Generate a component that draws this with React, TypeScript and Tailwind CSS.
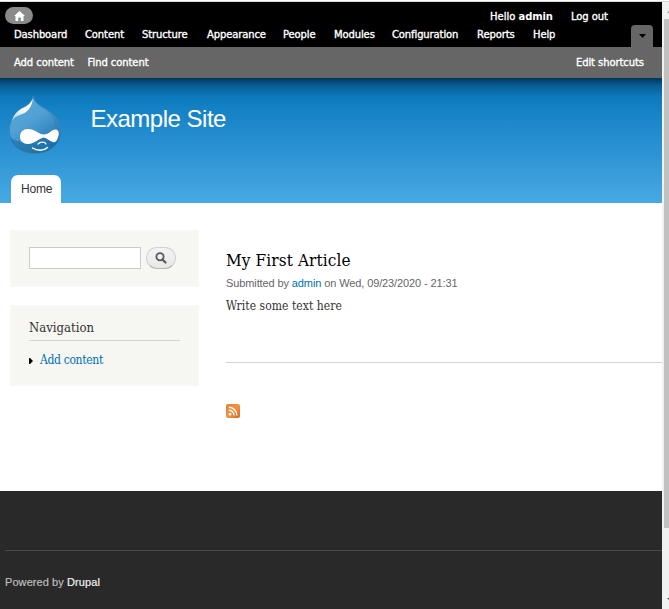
import React from "react";

const menu = [
  { label: "Dashboard", cls: "w-[71px]" },
  { label: "Content", cls: "w-[57px]" },
  { label: "Structure", cls: "w-[65px]" },
  { label: "Appearance", cls: "w-[76px]" },
  { label: "People", cls: "w-[51px]" },
  { label: "Modules", cls: "w-[58px]" },
  { label: "Configuration", cls: "w-[85px]" },
  { label: "Reports", cls: "w-[56px]" },
  { label: "Help", cls: "w-[30px]" },
];

function Druplicon() {
  return (
    <svg width="54" height="60" viewBox="0 0 54 60" className="block">
      <defs>
        <linearGradient id="drop" x1="0" y1="0" x2="0.6" y2="1">
          <stop offset="0" stopColor="#5dabdc" />
          <stop offset="0.5" stopColor="#50a0d4" />
          <stop offset="1" stopColor="#2278b0" />
        </linearGradient>
        <linearGradient id="shine" x1="1" y1="0" x2="0" y2="1">
          <stop offset="0.4" stopColor="#fff" />
          <stop offset="1" stopColor="#fff" stopOpacity="0.5" />
        </linearGradient>
      </defs>
      <path d="M25 1C27 9 33 11 39 15C48 20 52.5 27 52.5 36C52.5 50 41 58.500 27 58.500C12 58.500 1.500 49 1.500 35C1.500 25 7 17 14 13C20 10 24 7 25 1Z" fill="url(#drop)" stroke="#3c80ab" strokeWidth="0.8" />
      <path d="M36 14C45 19 48 26 47 35L51 37C52 27 46 19 36 14Z" fill="#2f80b8" opacity="0.6" />
      <path d="M2 42C8 48 18 47 27 44C37 40 46 40 52 43C47 54 38 58 27 58C14 58 4 52 2 42Z" fill="#1b6ba0" opacity="0.55" />
      <path d="M25 3C24 10 22 14 18 17C13 21 8 19 4 26C6 19 10 15 15 13C21 10 23 8 25 3Z" fill="url(#shine)" />
      <path d="M20 34C27 34 31 39.500 36 39.500C41 39.500 44 34 48 34.500C52 35.500 51 41 49 45C46 50.500 41 44 36 42.500C31 43 27 49 20 49C15 49 12 46 12 42C12 37 15 34 20 34Z" fill="#fff" />
      <path d="M30 49C32 46.500 37 46.500 38 49" fill="none" stroke="#f1f7fb" strokeWidth="1.3" strokeLinecap="round" />
      <path d="M24.500 53C29 56 36 56 39.500 52.500" fill="none" stroke="#fff" strokeWidth="1.5" strokeLinecap="round" />
    </svg>
  );
}

function AdminToolbar() {
  return (
    <div className="font-['DejaVu_Sans','Verdana',sans-serif] text-[10px] leading-[14px] text-white">
      <div className="h-[45px] bg-black pl-[5px]">
        <div className="flex h-[24px] items-start justify-between pt-[5px]">
          <div className="flex h-[17px] w-7 items-center justify-center rounded-full bg-[#8b8b8b]">
            <svg width="11" height="10" viewBox="0 0 11 10">
              <path d="M5.5 0L11 5H9.5V10H6.8V6.6H4.2V10H1.5V5H0Z" fill="white" />
            </svg>
          </div>
          <div className="flex w-[172px] pt-[3px] [-webkit-text-stroke:0.35px_white]">
            <span className="w-[81px] whitespace-nowrap">Hello <b className="tracking-[-0.15px] [-webkit-text-stroke:0]">admin</b></span>
            <span className="tracking-[-0.1px]">Log out</span>
          </div>
        </div>
        <div className="flex h-[21px] pl-[9px]">
          {menu.map((m) => (
            <a key={m.label} className={`${m.cls} shrink-0 whitespace-nowrap pt-[2px] tracking-[-0.12px] [-webkit-text-stroke:0.35px_white]`}>{m.label}</a>
          ))}
          <div className="-mt-[1px] ml-[68px] flex h-[22px] w-[22px] shrink-0 items-center justify-center rounded-t-[4px] bg-[#666]">
            <svg width="7" height="4" viewBox="0 0 7 4"><path d="M0 0H7L3.5 4Z" fill="#000" /></svg>
          </div>
        </div>
      </div>
      <div className="flex h-[31px] items-center bg-[#666] pl-[14px] pr-[18px] tracking-[-0.08px] [-webkit-text-stroke:0.35px_white]">
        <span className="w-[73.5px]">Add content</span>
        <span>Find content</span>
        <span className="ml-auto">Edit shortcuts</span>
      </div>
    </div>
  );
}

export default function App() {
  return (
    <div className="flex h-[609px] w-[669px] flex-col overflow-hidden bg-white font-['Liberation_Sans','Arial',sans-serif]">
      <div className="h-[2px] shrink-0 border-b border-[#d5d8da] bg-white" />
      <div className="flex h-[607px]">
        <div className="w-[662px] shrink-0">
          <AdminToolbar />
          <header className="h-[125px] bg-[linear-gradient(#003558_0px,#0a5b92_7px,#0d78ba_18px,#1481c5_30px,#48a9e4_125px)]">
            <div className="flex h-[97px] pl-2 pt-[17px]">
              <Druplicon />
              <h1 className="ml-[28.5px] mt-[9px] text-[24px] leading-[30px] tracking-[-0.5px] text-white">Example Site</h1>
            </div>
            <div className="ml-[11px] h-7 w-[50px] rounded-t-[7px] bg-white pl-[10px] pt-[6px] text-[12px] leading-4 tracking-[-0.2px] text-[#333]">Home</div>
          </header>
          <main className="flex h-[288px] pl-[10px] pt-[27px]">
            <aside className="w-[189px] shrink-0">
              <div className="flex h-[57px] border border-[#f9f9f9] bg-[#f6f6f2] pl-[18px] pt-4">
                <div className="h-[22px] w-[112px] border border-[#ccc] bg-white" />
                <div className="ml-[5px] flex h-[22px] w-[30px] items-center justify-center rounded-full border border-[#d2d2d2] border-b-[#b4b4b4] bg-[linear-gradient(#f3f3f3,#e8e8e8)]">
                  <svg width="12" height="12" viewBox="0 0 12 12" fill="none" stroke="#5a5a5a">
                    <circle cx="5" cy="4.8" r="3.6" strokeWidth="1.8" />
                    <path d="M7.5 7.5L10.5 10.5" strokeWidth="2.2" strokeLinecap="round" />
                  </svg>
                </div>
              </div>
              <div className="mt-[18px] h-[81px] border border-[#f9f9f9] bg-[#f6f6f2] px-[18px] pt-3 font-['DejaVu_Serif_Condensed','Georgia',serif]">
                <h2 className="h-[23px] whitespace-nowrap border-b border-[#d3d3d3] text-[13px] leading-5 text-[#333]">Navigation</h2>
                <div className="mt-[9px] flex items-center text-[12px] leading-5 tracking-[-0.33px] text-[#0071b3]">
                  <svg width="4" height="6" viewBox="0 0 4 6" className="mr-[7px] mt-[2px]"><path d="M0 0H1L4 3L1 6H0Z" fill="#000" /></svg>
                  <span>Add content</span>
                </div>
              </div>
            </aside>
            <article className="ml-[27px] w-[436px] pt-[18px]">
              <h2 className="whitespace-nowrap font-['DejaVu_Serif_Condensed','Georgia',serif] text-[17px] leading-6 tracking-[0.12px] text-black">My First Article</h2>
              <p className="mt-[3px] text-[11px] leading-4 tracking-[-0.11px] text-[#666]">Submitted by <a className="text-[#0071b3]">admin</a> on Wed, 09/23/2020 - 21:31</p>
              <p className="mt-[5px] whitespace-nowrap font-['DejaVu_Serif_Condensed','Georgia',serif] text-[12px] leading-5 tracking-[0.05px] text-[#333]">Write some text here</p>
              <div className="mt-[46px] border-t border-[#d3d3d3]" />
              <svg className="mt-[41px]" width="14" height="14" viewBox="0 0 14 14">
                <defs><linearGradient id="rss" x2="1" y2="1"><stop stopColor="#e78137" /><stop offset="0.5" stopColor="#f19243" /><stop offset="1" stopColor="#d86523" /></linearGradient></defs>
                <rect width="14" height="14" rx="2" fill="url(#rss)" />
                <circle cx="4" cy="10.2" r="1.3" fill="#fff" />
                <path d="M2.8 6.2A5 5 0 0 1 8 11.4M2.8 3.3A8 8 0 0 1 10.9 11.4" fill="none" stroke="#fff" strokeWidth="1.4" />
              </svg>
            </article>
          </main>
          <footer className="h-[118px] bg-[#292929] pl-[5px] pt-[59px]">
            <div className="border-t border-[#4a4a4a] pt-[23px] text-[11px] leading-4 tracking-[0.08px] text-[#bdbdbd] [-webkit-text-stroke:0.2px_currentColor]">
              Powered by <span className="text-[#f0f0f0]">Drupal</span>
            </div>
          </footer>
        </div>
        <div className="flex w-[7px] shrink-0 flex-col bg-[#f1f1f1] pl-[2px]">
          <svg width="5" height="17" viewBox="0 0 5 17"><path d="M3 11L5 8.5V11Z" fill="#a3a3a3" /></svg>
          <div className="h-[509px] bg-[#c1c1c1]" />
          <svg width="5" height="81" viewBox="0 0 5 81"><path d="M3 70H5V72Z" fill="#505050" /></svg>
        </div>
      </div>
    </div>
  );
}
